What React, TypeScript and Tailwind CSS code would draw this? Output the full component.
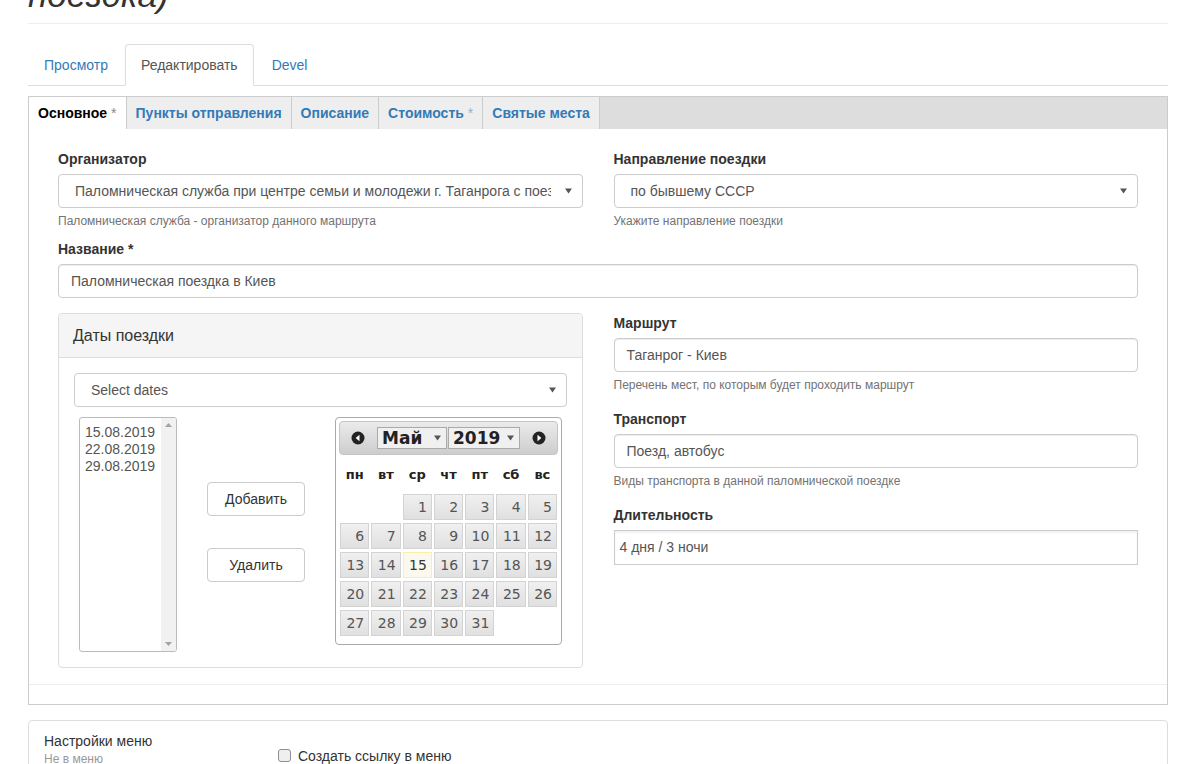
import React from "react";

const sans = "font-['Liberation_Sans',Arial,sans-serif]";
const deja = "font-['DejaVu_Sans',Verdana,sans-serif]";

function Caret({ className = "" }: { className?: string }) {
  return (
    <svg width="7" height="6" viewBox="0 0 7 6" className={className}>
      <path d="M0 0.5h7L3.5 5.5z" fill="#555" />
    </svg>
  );
}

function SelectBox({ value, className = "" }: { value: string; className?: string }) {
  return (
    <div
      className={`h-[34px] border border-[#ccc] rounded-[4px] bg-white flex items-center pl-[16px] pr-[10px] text-[14px] text-[#555] ${className}`}
    >
      <span className="flex-1 overflow-hidden whitespace-nowrap mr-[14px]">{value}</span>
      <Caret />
    </div>
  );
}

function TextInput({ value }: { value: string }) {
  return (
    <div className="h-[34px] border border-[#ccc] rounded-[4px] bg-white flex items-center px-[12px] text-[14px] text-[#555] shadow-[inset_0_1px_1px_rgba(0,0,0,0.075)]">
      {value}
    </div>
  );
}

function Label({ children }: { children: React.ReactNode }) {
  return <div className="h-[20px] leading-[20px] mb-[5px] text-[14px] font-bold text-[#333]">{children}</div>;
}

function Help({ children }: { children: React.ReactNode }) {
  return <div className="mt-[5px] leading-[17px] text-[12px] text-[#737373]">{children}</div>;
}

function CircleArrow({ dir }: { dir: "left" | "right" }) {
  return (
    <svg width="14" height="14" viewBox="0 0 14 14">
      <circle cx="7" cy="7" r="6.5" fill="#222" />
      {dir === "left" ? <path d="M8.5 3.8v6.4L4.6 7z" fill="#fff" /> : <path d="M5.5 3.8v6.4L9.4 7z" fill="#fff" />}
    </svg>
  );
}

function Calendar() {
  const days = ["пн", "вт", "ср", "чт", "пт", "сб", "вс"];
  const cells: (number | null)[] = [null, null];
  for (let i = 1; i <= 31; i++) cells.push(i);

  return (
    <div className={`w-[227px] h-[228px] border border-[#aaa] rounded-[4px] p-[3px] bg-white ${deja}`}>
      <div className="h-[34px] border border-[#c5c5c5] rounded-[4px] bg-linear-to-b from-[#ebebeb] to-[#cdcdcd] flex items-center">
        <div className="w-[36px] flex justify-center">
          <CircleArrow dir="left" />
        </div>
        <div className="ml-[1px] h-[22px] w-[70px] border border-[#aaa] bg-[#f0f0f0] flex items-center pl-[4px] pr-[5px]">
          <span className="flex-1 text-[17px] font-bold text-[#222] leading-none">Май</span>
          <Caret />
        </div>
        <div className="ml-[1px] h-[22px] w-[72px] border border-[#aaa] bg-[#f0f0f0] flex items-center pl-[4px] pr-[5px]">
          <span className="flex-1 text-[17px] font-bold text-[#222] leading-none">2019</span>
          <Caret />
        </div>
        <div className="flex-1 flex justify-center">
          <CircleArrow dir="right" />
        </div>
      </div>
      <div className="mt-[7px] px-[1px] grid grid-cols-7 gap-x-[2px] h-[26px]">
        {days.map((d) => (
          <div key={d} className="text-center text-[13px] font-bold text-[#222] leading-[26px]">
            {d}
          </div>
        ))}
      </div>
      <div className="mt-[6px] px-[1px] grid grid-cols-7 gap-x-[2px] gap-y-[3px]">
        {cells.map((n, i) =>
          n === null ? (
            <div key={"e" + i} className="h-[26px]" />
          ) : n === 15 ? (
            <div
              key={n}
              className="h-[26px] border border-[#fcefa1] bg-[#fbf9ee] text-right pr-[4px] text-[14px] leading-[24px] text-[#363636]"
            >
              {n}
            </div>
          ) : (
            <div
              key={n}
              className="h-[26px] border border-[#d3d3d3] bg-linear-to-b from-[#f0f0f0] to-[#e0e0e0] text-right pr-[4px] text-[14px] leading-[24px] text-[#555]"
            >
              {n}
            </div>
          )
        )}
      </div>
    </div>
  );
}

function DatesPanel() {
  return (
    <div className="border border-[#ddd] rounded-[4px] bg-white">
      <div className="h-[44px] bg-[#f5f5f5] border-b border-[#ddd] rounded-t-[4px] px-[14px] flex items-center text-[16px] text-[#333]">
        Даты поездки
      </div>
      <div className="p-[15px]">
        <SelectBox value="Select dates" />
        <div className="mt-[10px] flex">
          <div className="ml-[5px] w-[98px] h-[235px] border border-[#bbb] rounded-[3px] flex overflow-hidden">
            <div className="flex-1 pl-[5px] pt-[6px] text-[14px] leading-[17px] text-[#555]">
              <div>15.08.2019</div>
              <div>22.08.2019</div>
              <div>29.08.2019</div>
            </div>
            <div className="w-[15px] bg-[#f1f1f1] flex flex-col justify-between items-center py-[5px]">
              <svg width="7" height="4" viewBox="0 0 7 4">
                <path d="M0 4h7L3.5 0z" fill="#a3a3a3" />
              </svg>
              <svg width="7" height="4" viewBox="0 0 7 4">
                <path d="M0 0h7L3.5 4z" fill="#a3a3a3" />
              </svg>
            </div>
          </div>
          <div className="ml-[30px] w-[98px] pt-[65px] flex flex-col gap-[32px]">
            <div className="h-[34px] border border-[#ccc] rounded-[4px] bg-white flex items-center justify-center text-[14px] text-[#333]">
              Добавить
            </div>
            <div className="h-[34px] border border-[#ccc] rounded-[4px] bg-white flex items-center justify-center text-[14px] text-[#333]">
              Удалить
            </div>
          </div>
          <div className="ml-[30px]">
            <Calendar />
          </div>
        </div>
      </div>
    </div>
  );
}

export default function App() {
  const tabs = [
    { label: "Основное", star: true, active: true },
    { label: "Пункты отправления" },
    { label: "Описание" },
    { label: "Стоимость", star: true },
    { label: "Святые места" },
  ];

  return (
    <div className={`h-screen overflow-hidden bg-white text-[#333] ${sans}`}>
      <div className="px-[28px]">
        {/* page title, cut off at top */}
        <div className="border-b border-[#eee] h-[24px] overflow-hidden">
          <h1 className="-mt-[25px] text-[35px] leading-[40px] italic text-[#333] whitespace-nowrap">поездка)</h1>
        </div>

        {/* primary tabs */}
        <div className="mt-[20px] flex border-b border-[#ddd] h-[42px] text-[14px]">
          <div className="mr-[1px] px-[16px] h-[42px] flex items-center text-[#337ab7]">Просмотр</div>
          <div className="mr-[1px] px-[15px] h-[42px] flex items-center text-[#555] bg-white border border-[#ddd] border-b-white rounded-t-[4px]">
            Редактировать
          </div>
          <div className="px-[17px] h-[42px] flex items-center text-[#337ab7]">Devel</div>
        </div>

        {/* main form box */}
        <div className="mt-[10px] border border-[#ccc]">
          <div className="flex h-[32px] bg-[#ddd] text-[14px] font-bold">
            {tabs.map((t) => (
              <div
                key={t.label}
                className={`px-[9px] flex items-center border-r border-[#ccc] ${
                  t.active ? "bg-white text-[#000]" : "bg-[#eee] text-[#337ab7]"
                }`}
              >
                {t.label}
                {t.star && (
                  <span className={`ml-[4px] font-normal ${t.active ? "text-[#888]" : "text-[#8fb3d6]"}`}>*</span>
                )}
              </div>
            ))}
          </div>

          <div className="pt-[20px] px-[29px]">
            <div className="grid grid-cols-2 gap-x-[31px]">
              <div>
                <Label>Организатор</Label>
                <SelectBox value="Паломническая служба при центре семьи и молодежи г. Таганрога с поездками по святым местам" />
                <Help>Паломническая служба - организатор данного маршрута</Help>
              </div>
              <div>
                <Label>Направление поездки</Label>
                <SelectBox value="по бывшему СССР" />
                <Help>Укажите направление поездки</Help>
              </div>
            </div>

            <div className="mt-[9px]">
              <Label>Название *</Label>
              <TextInput value="Паломническая поездка в Киев" />
            </div>

            <div className="mt-[15px] grid grid-cols-2 gap-x-[31px]">
              <DatesPanel />
              <div>
                <Label>Маршрут</Label>
                <TextInput value="Таганрог - Киев" />
                <Help>Перечень мест, по которым будет проходить маршрут</Help>
                <div className="mt-[15px]">
                  <Label>Транспорт</Label>
                  <TextInput value="Поезд, автобус" />
                  <Help>Виды транспорта в данной паломнической поездке</Help>
                </div>
                <div className="mt-[15px]">
                  <Label>Длительность</Label>
                  <div className="h-[35px] border border-[#ccc] bg-white flex items-center px-[5px] text-[14px] text-[#555] shadow-[inset_0_2px_2px_rgba(0,0,0,0.06)]">
                    4 дня / 3 ночи
                  </div>
                </div>
              </div>
            </div>
          </div>

          <div className="mt-[16px] border-b border-[#eee]" />
          <div className="h-[19px]" />
        </div>

        {/* menu settings */}
        <div className="mt-[15px] border border-[#ddd] rounded-[4px] h-[80px] flex">
          <div className="w-[187px] px-[15px] pt-[10px]">
            <div className="text-[14px] leading-[20px] text-[#333]">Настройки меню</div>
            <div className="text-[12px] leading-[16px] text-[#999]">Не в меню</div>
          </div>
          <div className="pl-[62px] pt-[27px] flex items-start">
            <span className="mt-[1px] w-[13px] h-[13px] border border-[#8f8f8f] rounded-[3px] bg-[#efefef]" />
            <span className="ml-[7px] text-[14px] leading-[16px] text-[#333]">Создать ссылку в меню</span>
          </div>
        </div>
      </div>
    </div>
  );
}
